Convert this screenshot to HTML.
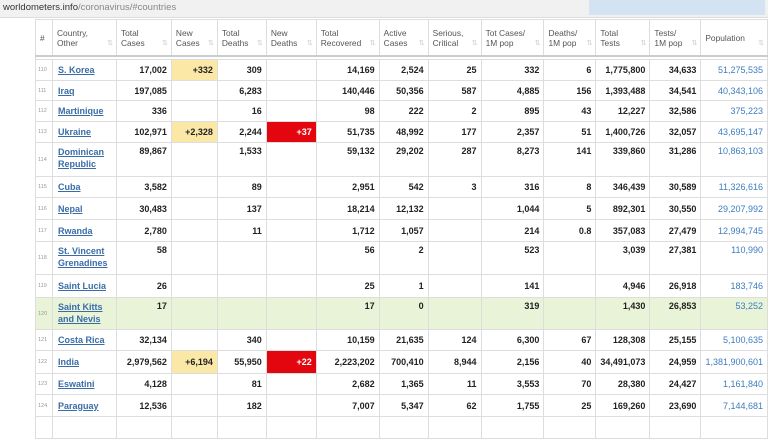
<!DOCTYPE html>
<html><head><style>
body{margin:0;width:768px;height:420px;overflow:hidden;background:#fff;font-family:"Liberation Sans",Arial,sans-serif;position:relative}
.bar{position:absolute;left:0;top:0;width:768px;height:17px;background:#f1f1f1;border-bottom:1px solid #ddd}
.url{position:absolute;left:3px;top:2px;font-size:9.5px;color:#333}
.url span{color:#888}
.blue{position:absolute;left:589px;top:0;width:176px;height:15px;background:#d3e3f1}
table{position:absolute;left:35px;top:19px;border-collapse:collapse;table-layout:fixed;font-size:9px}
td,th{border:1px solid #ddd;padding:0 4px;overflow:hidden;white-space:nowrap}
th{font-weight:normal;color:#555;text-align:left;vertical-align:middle;font-size:8.4px;line-height:10px;height:35px;position:relative;white-space:normal}
th:after{content:"⇅";position:absolute;right:3px;bottom:6px;color:#ccc;font-size:7px}
th.n:after{content:""}
td{text-align:right;font-weight:bold;color:#222;vertical-align:middle}
td.r{font-size:5.5px;color:#999;font-weight:normal;text-align:left;padding:0 2px}
td.c{text-align:left;color:#3a6da8;text-decoration:underline;white-space:normal;line-height:12px;padding-left:5px}
td.p{color:#3d7cc0;font-weight:normal}
tr.two td{vertical-align:top;padding-top:3px}
tr.two td.r{vertical-align:middle;padding-top:0}
.y{background:#fbe8a6}
.red{background:#e4060f;color:#fff}
.g td{background:#e8f3d8}
.sp td{height:2px;border-top:2px solid #ccc;padding:0}
</style></head><body>
<div class="bar"><div class="url">worldometers.info<span>/coronavirus/#countries</span></div></div>
<div class="blue"></div>
<table>
<colgroup><col style="width:17px"><col style="width:64px"><col style="width:55px"><col style="width:46px"><col style="width:49px"><col style="width:50px"><col style="width:63px"><col style="width:49px"><col style="width:53px"><col style="width:63px"><col style="width:52px"><col style="width:54px"><col style="width:51px"><col style="width:64px"></colgroup>
<tr><th class="n">#</th><th>Country,<br>Other</th><th>Total<br>Cases</th><th>New<br>Cases</th><th>Total<br>Deaths</th><th>New<br>Deaths</th><th>Total<br>Recovered</th><th>Active<br>Cases</th><th>Serious,<br>Critical</th><th>Tot Cases/<br>1M pop</th><th>Deaths/<br>1M pop</th><th>Total<br>Tests</th><th>Tests/<br>1M pop</th><th>Population</th></tr>
<tr class="sp"><td colspan="14"></td></tr>
<tr style="height:21px"><td class="r">110</td><td class="c">S. Korea</td><td>17,002</td><td class="y">+332</td><td>309</td><td></td><td>14,169</td><td>2,524</td><td>25</td><td>332</td><td>6</td><td>1,775,800</td><td>34,633</td><td class="p">51,275,535</td></tr>
<tr style="height:20px"><td class="r">111</td><td class="c">Iraq</td><td>197,085</td><td></td><td>6,283</td><td></td><td>140,446</td><td>50,356</td><td>587</td><td>4,885</td><td>156</td><td>1,393,488</td><td>34,541</td><td class="p">40,343,106</td></tr>
<tr style="height:21px"><td class="r">112</td><td class="c">Martinique</td><td>336</td><td></td><td>16</td><td></td><td>98</td><td>222</td><td>2</td><td>895</td><td>43</td><td>12,227</td><td>32,586</td><td class="p">375,223</td></tr>
<tr style="height:21px"><td class="r">113</td><td class="c">Ukraine</td><td>102,971</td><td class="y">+2,328</td><td>2,244</td><td class="red">+37</td><td>51,735</td><td>48,992</td><td>177</td><td>2,357</td><td>51</td><td>1,400,726</td><td>32,057</td><td class="p">43,695,147</td></tr>
<tr class="two" style="height:34px"><td class="r">114</td><td class="c">Dominican Republic</td><td>89,867</td><td></td><td>1,533</td><td></td><td>59,132</td><td>29,202</td><td>287</td><td>8,273</td><td>141</td><td>339,860</td><td>31,286</td><td class="p">10,863,103</td></tr>
<tr style="height:21px"><td class="r">115</td><td class="c">Cuba</td><td>3,582</td><td></td><td>89</td><td></td><td>2,951</td><td>542</td><td>3</td><td>316</td><td>8</td><td>346,439</td><td>30,589</td><td class="p">11,326,616</td></tr>
<tr style="height:22px"><td class="r">116</td><td class="c">Nepal</td><td>30,483</td><td></td><td>137</td><td></td><td>18,214</td><td>12,132</td><td></td><td>1,044</td><td>5</td><td>892,301</td><td>30,550</td><td class="p">29,207,992</td></tr>
<tr style="height:22px"><td class="r">117</td><td class="c">Rwanda</td><td>2,780</td><td></td><td>11</td><td></td><td>1,712</td><td>1,057</td><td></td><td>214</td><td>0.8</td><td>357,083</td><td>27,479</td><td class="p">12,994,745</td></tr>
<tr class="two" style="height:33px"><td class="r">118</td><td class="c">St. Vincent Grenadines</td><td>58</td><td></td><td></td><td></td><td>56</td><td>2</td><td></td><td>523</td><td></td><td>3,039</td><td>27,381</td><td class="p">110,990</td></tr>
<tr style="height:23px"><td class="r">119</td><td class="c">Saint Lucia</td><td>26</td><td></td><td></td><td></td><td>25</td><td>1</td><td></td><td>141</td><td></td><td>4,946</td><td>26,918</td><td class="p">183,746</td></tr>
<tr class="two g" style="height:32px"><td class="r">120</td><td class="c">Saint Kitts and Nevis</td><td>17</td><td></td><td></td><td></td><td>17</td><td>0</td><td></td><td>319</td><td></td><td>1,430</td><td>26,853</td><td class="p">53,252</td></tr>
<tr style="height:21px"><td class="r">121</td><td class="c">Costa Rica</td><td>32,134</td><td></td><td>340</td><td></td><td>10,159</td><td>21,635</td><td>124</td><td>6,300</td><td>67</td><td>128,308</td><td>25,155</td><td class="p">5,100,635</td></tr>
<tr style="height:23px"><td class="r">122</td><td class="c">India</td><td>2,979,562</td><td class="y">+6,194</td><td>55,950</td><td class="red">+22</td><td>2,223,202</td><td>700,410</td><td>8,944</td><td>2,156</td><td>40</td><td>34,491,073</td><td>24,959</td><td class="p">1,381,900,601</td></tr>
<tr style="height:21px"><td class="r">123</td><td class="c">Eswatini</td><td>4,128</td><td></td><td>81</td><td></td><td>2,682</td><td>1,365</td><td>11</td><td>3,553</td><td>70</td><td>28,380</td><td>24,427</td><td class="p">1,161,840</td></tr>
<tr style="height:22px"><td class="r">124</td><td class="c">Paraguay</td><td>12,536</td><td></td><td>182</td><td></td><td>7,007</td><td>5,347</td><td>62</td><td>1,755</td><td>25</td><td>169,260</td><td>23,690</td><td class="p">7,144,681</td></tr>
<tr style="height:22px"><td class="r"></td><td></td><td></td><td></td><td></td><td></td><td></td><td></td><td></td><td></td><td></td><td></td><td></td><td></td></tr>
</table>
</body></html>
